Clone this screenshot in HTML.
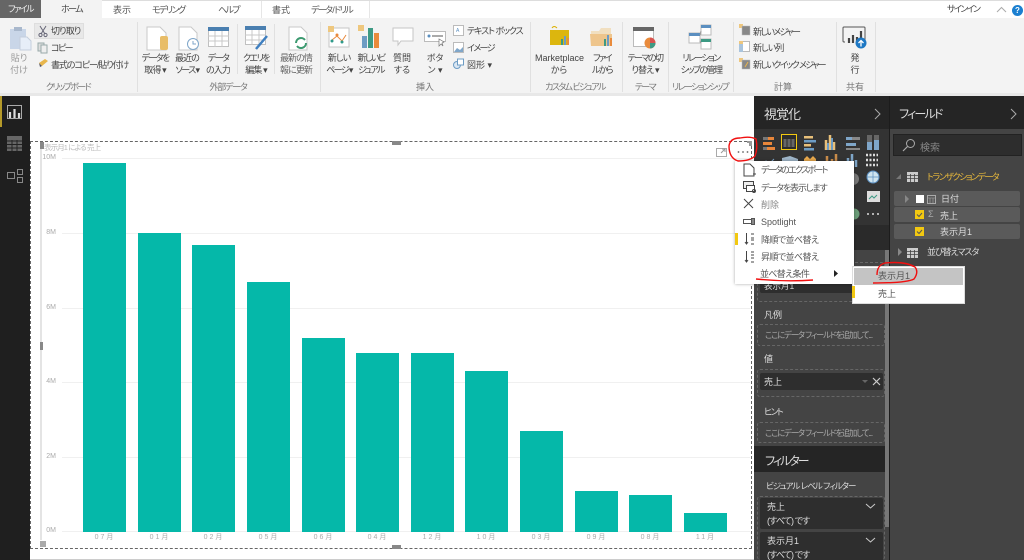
<!DOCTYPE html>
<html lang="ja"><head><meta charset="utf-8"><title>Power BI</title>
<style>
html,body{margin:0;padding:0;background:#fff}
#p{position:relative;width:1024px;height:560px;overflow:hidden;background:#fff;font-family:"Liberation Sans","Noto Sans CJK JP",sans-serif;font-size:9px;color:#555;font-feature-settings:"palt";letter-spacing:-.9px;filter:blur(.35px)}
#p div{position:absolute;white-space:nowrap}
#p .n{letter-spacing:0}
#p .k{letter-spacing:-1.6px}
.c{text-align:center;line-height:12px}
.g{color:#777;font-size:9px;text-align:center}
.sep{width:1px;background:#e0e0e0;top:22px;height:70px}
.vs{width:1px;background:#e0e0e0}
.bar{background:#05b8a9;width:43px;bottom:28px}
#p .x{top:532px;width:44px;text-align:center;font-size:7px;color:#aaa;letter-spacing:2px}
#p .y{font-size:7px;color:#aaa;text-align:right;width:20px;left:36px;letter-spacing:0}
.gl{left:62px;width:688px;height:1px;background:#f0f0f0}
.m{left:761px;font-size:9px;color:#555;line-height:12px}
.w{color:#ddd;font-size:9px}
.box{border:1px dashed #666;border-radius:3px;box-sizing:border-box}
svg{position:absolute;overflow:visible}
</style></head><body><div id="p">

<!-- tabs -->
<div style="left:0;top:0;width:1024px;height:18px;background:#fff"></div>
<div style="left:0;top:0;width:1024px;height:1px;background:#ddd"></div>
<div class="k" style="left:0;top:0;width:41px;height:18px;background:#666;color:#eee;font-size:9px;line-height:18px;text-align:center">ファイル</div>
<div class="k" style="left:41px;top:0;width:61px;height:19px;background:#f3f3f3;color:#444;line-height:19px;text-align:center">ホーム</div>
<div class="n" style="left:113px;top:3px;color:#555">表示</div>
<div class="k" style="left:152px;top:3px;color:#555">モデリング</div>
<div class="k" style="left:218px;top:3px;color:#555">ヘルプ</div>
<div style="left:261px;top:1px;width:1px;height:17px;background:#e6e6e6"></div>
<div class="n" style="left:272px;top:3px;color:#555">書式</div>
<div class="k" style="left:311px;top:3px;color:#555">データ / ドリル</div>
<div style="left:369px;top:1px;width:1px;height:17px;background:#e6e6e6"></div>
<div class="k" style="left:947px;top:2px;color:#444">サインイン</div>
<svg style="left:996px;top:6px" width="12" height="8"><path d="M1 6L5.500 1.500L10 6" fill="none" stroke="#aaa"/></svg>
<div class="n" style="left:1012px;top:5px;width:11px;height:11px;border-radius:50%;background:#1a7fd0;color:#fff;font-size:8px;font-weight:bold;line-height:11px;text-align:center">?</div>

<!-- ribbon -->
<div style="left:0;top:18px;width:1024px;height:75px;background:#f3f3f3"></div>
<div style="left:0;top:93px;width:1024px;height:3px;background:#e8e8e8"></div>
<div class="sep" style="left:137px"></div><div class="sep" style="left:320px"></div><div class="sep" style="left:530px"></div><div class="sep" style="left:622px"></div><div class="sep" style="left:668px"></div><div class="sep" style="left:733px"></div><div class="sep" style="left:836px"></div><div class="sep" style="left:875px"></div>
<div class="vs" style="left:237px;top:24px;height:50px"></div><div class="vs" style="left:274px;top:24px;height:50px"></div>

<!-- clipboard -->
<svg style="left:9px;top:26px" width="24" height="28"><rect x="1" y="3" width="16" height="20" fill="#c9d6e8"/><rect x="5" y="1" width="8" height="4" fill="#a9b8cc"/><path d="M11 11h7l4 4v9H11z" fill="#e7eef8" stroke="#c5cfdd"/></svg>
<div class="c n" style="left:8px;top:52px;width:22px;color:#999">貼り<br>付け</div>
<div style="left:34px;top:23px;width:50px;height:16px;background:#e8e8e8;border:1px solid #dedede;box-sizing:border-box"></div>
<svg style="left:38px;top:25px" width="10" height="12"><path d="M2 1L7 9M8 1L3 9" stroke="#667" fill="none"/><circle cx="2.500" cy="10" r="1.600" fill="none" stroke="#667"/><circle cx="7.500" cy="10" r="1.600" fill="none" stroke="#667"/></svg>
<div style="left:51px;top:24px;color:#444">切り取り</div>
<svg style="left:37px;top:42px" width="12" height="12"><rect x="1" y="1" width="6" height="8" fill="#ddd" stroke="#9aa"/><rect x="4" y="3" width="6" height="8" fill="#eee" stroke="#9aa"/></svg>
<div class="k" style="left:51px;top:41px;color:#444">コピー</div>
<svg style="left:38px;top:58px" width="11" height="10"><path d="M1 5L7 1L10 3L4 8z" fill="#e8b64c"/><path d="M1 5L4 8L2 9z" fill="#556"/></svg>
<div style="left:51px;top:58px;color:#444;letter-spacing:-1.1px">書式のコピー/貼り付け</div>
<div class="g k" style="left:40px;top:80px;width:56px">クリップボード</div>

<!-- external data -->
<svg style="left:146px;top:26px" width="24" height="24"><path d="M1 1h13l6 6v17H1z" fill="#fff" stroke="#c9c9c9"/><rect x="14" y="10" width="8" height="14" rx="2" fill="#e8bd68"/></svg>
<div class="c" style="left:140px;top:52px;width:30px;color:#444"><span class="k">データを</span><br>取得 ▾</div>
<svg style="left:178px;top:26px" width="24" height="24"><path d="M1 1h12l6 6v17H1z" fill="#fff" stroke="#c9c9c9"/><circle cx="15" cy="18" r="5.500" fill="#fff" stroke="#7fa6c9"/><path d="M15 15v3h3" fill="none" stroke="#7fa6c9"/></svg>
<div class="c" style="left:171px;top:52px;width:32px;color:#444">最近の<br><span class="k">ソース ▾</span></div>
<svg style="left:208px;top:27px" width="21" height="20"><rect x=".5" y=".5" width="20" height="19" fill="#fff" stroke="#c0c0c0"/><rect width="21" height="4" fill="#4a7fb0"/><path d="M0 9h21M0 14h21M7 4v16M14 4v16" stroke="#c8c8c8"/></svg>
<div class="c" style="left:202px;top:52px;width:32px;color:#444"><span class="k">データ</span><br>の入力</div>
<svg style="left:245px;top:26px" width="24" height="24"><rect x=".5" y=".5" width="20" height="18" fill="#fff" stroke="#c0c0c0"/><rect width="21" height="4" fill="#4a7fb0"/><path d="M0 9h21M0 14h21M7 4v15M14 4v15" stroke="#c8c8c8"/><path d="M11 23L22 10" stroke="#3f7fc0" stroke-width="2.500"/></svg>
<div class="c" style="left:240px;top:52px;width:32px;color:#444"><span class="k">クエリを</span><br>編集 ▾</div>
<svg style="left:288px;top:26px" width="22" height="24"><path d="M1 1h12l6 6v17H1z" fill="#fff" stroke="#c9c9c9"/><path d="M8 17a5 5 0 0 1 9-3M18 17a5 5 0 0 1-9 3" fill="none" stroke="#3c9a70" stroke-width="2"/></svg>
<div class="c" style="left:275px;top:52px;width:42px;color:#666">最新の情<br>報に更新</div>
<div class="g" style="left:205px;top:80px;width:46px;letter-spacing:-1.2px">外部データ</div>

<!-- insert -->
<svg style="left:328px;top:26px" width="22" height="22"><rect x="1" y="2" width="20" height="19" fill="#fff" stroke="#c5c5c5"/><rect x="0" y="0" width="6" height="6" fill="#eec77e"/><path d="M4 14L9 10L14 15L18 9" fill="none" stroke="#e9893b"/><circle cx="4" cy="15" r="1.500" fill="#2f9a8a"/><circle cx="14" cy="16" r="1.500" fill="#2f9a8a"/><circle cx="9" cy="9" r="1.500" fill="#e9893b"/></svg>
<div class="c" style="left:323px;top:52px;width:32px;color:#444">新しい<br><span class="k">ページ ▾</span></div>
<svg style="left:358px;top:25px" width="22" height="23"><rect x="0" y="0" width="6" height="6" fill="#eec77e"/><rect x="4" y="11" width="5" height="12" fill="#6d9cc4"/><rect x="10" y="3" width="5" height="20" fill="#3d9a84"/><rect x="16" y="8" width="5" height="15" fill="#e98b3c"/></svg>
<div class="c k" style="left:355px;top:52px;width:32px;color:#444">新しいビ<br>ジュアル</div>
<svg style="left:392px;top:27px" width="22" height="20"><path d="M1 1h20v13H9l-3 4v-4H1z" fill="#fff" stroke="#c5c5c5"/></svg>
<div class="c n" style="left:390px;top:52px;width:24px;color:#444">質問<br>する</div>
<svg style="left:424px;top:31px" width="23" height="16"><rect x=".5" y=".5" width="21" height="10" fill="#fff" stroke="#bbb"/><circle cx="5" cy="5" r="1.500" fill="#5b8fc0"/><path d="M8 5h11" stroke="#555"/><path d="M15 8v7l2-2 2 2-1-3 2-1z" fill="#fff" stroke="#777" stroke-width=".7"/></svg>
<div class="c n" style="left:421px;top:52px;width:28px;color:#444">ボタ<br>ン ▾</div>
<svg style="left:453px;top:25px" width="12" height="12"><rect x=".5" y=".5" width="10" height="10" fill="#fff" stroke="#bbb"/><text x="3" y="7" font-size="5" fill="#5b8fc0" font-family="Liberation Sans">A</text></svg>
<div style="left:467px;top:24px;color:#444;letter-spacing:-1.1px">テキスト ボックス</div>
<svg style="left:453px;top:42px" width="12" height="12"><rect x=".5" y=".5" width="10" height="10" fill="#fff" stroke="#bbb"/><path d="M1 10L4 6L7 8L10 5V10z" fill="#7fa6c9"/></svg>
<div class="k" style="left:467px;top:41px;color:#444">イメージ</div>
<svg style="left:453px;top:58px" width="12" height="12"><circle cx="4" cy="7" r="3.500" fill="#dbe7f3" stroke="#6d9cc4"/><rect x="4.500" y="1" width="6" height="6" fill="#fff" stroke="#6d9cc4"/></svg>
<div class="n" style="left:467px;top:58px;color:#444">図形 ▾</div>
<div class="g n" style="left:410px;top:80px;width:30px">挿入</div>

<!-- custom -->
<svg style="left:549px;top:24px" width="22" height="24"><path d="M3 4q2-3 5 0" fill="none" stroke="#dcb000"/><rect x="1" y="6" width="19" height="15" fill="#dcb60e"/><rect x="12" y="15" width="2" height="6" fill="#3d9a84"/><rect x="15" y="12" width="2" height="9" fill="#6d9cc4"/><rect x="18" y="14" width="2" height="7" fill="#e98b3c"/></svg>
<div class="c n" style="left:535px;top:52px;width:48px;color:#444">Marketplace<br>から</div>
<svg style="left:590px;top:26px" width="24" height="21"><path d="M1 5h8l2-3h10v6H1z" fill="#f1dfc0"/><path d="M0 8h22v12H1z" fill="#eec58c"/><rect x="14" y="13" width="2" height="7" fill="#3d9a84"/><rect x="17" y="9" width="2" height="11" fill="#6d9cc4"/><rect x="20" y="12" width="2" height="8" fill="#e98b3c"/></svg>
<div class="c k" style="left:586px;top:52px;width:32px;color:#444">ファイ<br>ルから</div>
<div class="g k" style="left:537px;top:80px;width:76px">カスタム ビジュアル</div>

<!-- theme -->
<svg style="left:633px;top:27px" width="26" height="23"><rect x=".5" y=".5" width="20" height="19" fill="#fff" stroke="#bbb"/><rect width="21" height="4" fill="#666"/><circle cx="17" cy="16" r="5.500" fill="#e98b3c"/><path d="M17 16V10.500A5.500 5.500 0 0 1 22.500 16z" fill="#d9534f"/><path d="M17 16H22.500A5.500 5.500 0 0 1 17 21.500z" fill="#3d9a84"/></svg>
<div class="c" style="left:624px;top:52px;width:42px;color:#444"><span class="k">テーマの切</span><br>り替え ▾</div>
<div class="g k" style="left:630px;top:80px;width:30px">テーマ</div>

<!-- relation -->
<svg style="left:689px;top:24px" width="24" height="26"><rect x="0" y="9" width="11" height="10" fill="#fff" stroke="#bbb"/><rect y="9" width="11" height="3" fill="#5b8fc0"/><rect x="12" y="1" width="10" height="10" fill="#fff" stroke="#bbb"/><rect x="12" y="1" width="10" height="3" fill="#5b8fc0"/><rect x="12" y="15" width="10" height="10" fill="#fff" stroke="#bbb"/><rect x="12" y="15" width="10" height="3" fill="#3d9a84"/><path d="M11 11L12 7M11 17L12 19" stroke="#999"/></svg>
<div class="c k" style="left:671px;top:52px;width:60px;color:#444">リレーション<br>シップの管理</div>
<div class="g k" style="left:669px;top:80px;width:62px">リレーションシップ</div>

<!-- calc -->
<svg style="left:739px;top:24px" width="12" height="12"><rect width="4" height="4" fill="#eec77e"/><rect x="3" y="2" width="8" height="9" fill="#888" stroke="#bbb" stroke-width=".5"/></svg>
<div class="k" style="left:753px;top:25px;color:#444">新しいメジャー</div>
<svg style="left:739px;top:41px" width="12" height="12"><rect x=".5" y=".5" width="10" height="10" fill="#fff" stroke="#bbb"/><rect width="4" height="4" fill="#eec77e"/><rect x="0" y="3" width="4" height="8" fill="#a9c4dd"/></svg>
<div style="left:753px;top:41px;color:#444">新しい列</div>
<svg style="left:739px;top:58px" width="12" height="12"><rect width="4" height="4" fill="#eec77e"/><rect x="3" y="2" width="8" height="9" fill="#888" stroke="#bbb" stroke-width=".5"/><path d="M6 9L9 4" stroke="#e9b44c"/></svg>
<div class="k" style="left:753px;top:58px;color:#444">新しいクイック メジャー</div>
<div class="g n" style="left:763px;top:80px;width:40px">計算</div>

<!-- publish -->
<svg style="left:842px;top:26px" width="28" height="24"><path d="M3 16H2q-1 0-1-1V2q0-1 1-1h20q1 0 1 1v13" fill="none" stroke="#555"/><path d="M7 17v-5M11 17V9M15 17v-6M19 17V5" stroke="#444" stroke-width="2.200"/><circle cx="19" cy="17" r="5.500" fill="#1e78c4"/><path d="M19 20.500v-6M16.500 17l2.500-2.500 2.500 2.500" fill="none" stroke="#fff" stroke-width="1.300"/></svg>
<div class="c n" style="left:848px;top:52px;width:14px;color:#444;font-size:9px">発<br>行</div>
<div class="g n" style="left:840px;top:80px;width:30px">共有</div>

<!-- left rail -->
<div style="left:0;top:96px;width:30px;height:464px;background:#1f1f1f"></div>
<div style="left:0;top:96px;width:2px;height:31px;background:#b59a2a"></div>
<svg style="left:7px;top:105px" width="16" height="16"><rect x=".5" y=".5" width="14" height="13" fill="none" stroke="#aaa"/><path d="M3 13V7M7.500 13V4M12 13V8" stroke="#ddd" stroke-width="2.200"/></svg>
<svg style="left:7px;top:136px" width="16" height="16"><rect y="0" width="15" height="15" fill="#666"/><path d="M0 5h15M0 8.500h15M0 12h15M5 4v11M10 4v11" stroke="#222"/></svg>
<svg style="left:7px;top:167px" width="16" height="16"><rect x=".5" y="5.500" width="7" height="6" fill="none" stroke="#888"/><rect x="10.500" y="2.500" width="5" height="5" fill="none" stroke="#888"/><rect x="10.500" y="10.500" width="5" height="5" fill="none" stroke="#888"/></svg>

<!-- chart frame -->
<div style="left:30px;top:141px;width:722px;height:408px;border:1px dashed #666;box-sizing:border-box"></div>
<div style="left:40px;top:146px;width:2px;height:394px;background:#e4e4e4"></div>
<div style="left:40px;top:142px;width:4px;height:7px;background:#888"></div>
<div style="left:40px;top:541px;width:6px;height:6px;background:#aaa"></div>
<div style="left:392px;top:141px;width:9px;height:4px;background:#888"></div>
<div style="left:392px;top:545px;width:9px;height:4px;background:#888"></div>
<div style="left:40px;top:342px;width:3px;height:8px;background:#888"></div>
<div style="left:44px;top:142px;font-size:7.500px;color:#bbb">表示月1 による 売上</div>

<div class="gl" style="top:158px"></div><div class="gl" style="top:233px"></div><div class="gl" style="top:308px"></div><div class="gl" style="top:382px"></div><div class="gl" style="top:457px"></div><div class="gl" style="top:531px"></div>
<div class="y" style="top:154px">10M</div><div class="y" style="top:229px">8M</div><div class="y" style="top:304px">6M</div><div class="y" style="top:378px">4M</div><div class="y" style="top:453px">2M</div><div class="y" style="top:527px">0M</div>

<div class="bar" style="left:83px;top:163px"></div>
<div class="bar" style="left:138px;top:233px"></div>
<div class="bar" style="left:192px;top:245px"></div>
<div class="bar" style="left:247px;top:282px"></div>
<div class="bar" style="left:302px;top:338px"></div>
<div class="bar" style="left:356px;top:353px"></div>
<div class="bar" style="left:411px;top:353px"></div>
<div class="bar" style="left:465px;top:371px"></div>
<div class="bar" style="left:520px;top:431px"></div>
<div class="bar" style="left:575px;top:491px"></div>
<div class="bar" style="left:629px;top:495px"></div>
<div class="bar" style="left:684px;top:513px"></div>
<div class="x" style="left:83px">07月</div><div class="x" style="left:138px">01月</div><div class="x" style="left:192px">02月</div><div class="x" style="left:247px">05月</div><div class="x" style="left:302px">06月</div><div class="x" style="left:356px">04月</div><div class="x" style="left:411px">12月</div><div class="x" style="left:465px">10月</div><div class="x" style="left:520px">03月</div><div class="x" style="left:575px">09月</div><div class="x" style="left:629px">08月</div><div class="x" style="left:684px">11月</div>
<div style="left:30px;top:559px;width:724px;height:1px;background:#ccc"></div>

<!-- viz panel -->
<div style="left:754px;top:96px;width:135px;height:464px;background:#444"></div>
<div style="left:754px;top:129px;width:135px;height:96px;background:#333"></div>
<div style="left:754px;top:96px;width:135px;height:33px;background:#252525"></div>
<div style="left:764px;top:104px;color:#ddd;font-size:13px;letter-spacing:-1px">視覚化</div>
<svg style="left:874px;top:108px" width="8" height="12"><path d="M1 1L6 6L1 11" fill="none" stroke="#aaa"/></svg>
<div style="left:889px;top:96px;width:1px;height:464px;background:#1c1c1c"></div>

<svg style="left:760px;top:132px" width="128" height="90">
<g transform="translate(1,2)">
<rect x="2" y="3" width="5" height="3" fill="#777"/><rect x="7" y="3" width="6" height="3" fill="#e8863a"/><rect x="2" y="8" width="9" height="3" fill="#e8863a"/><rect x="2" y="13" width="4" height="3" fill="#777"/><rect x="6" y="13" width="8" height="3" fill="#e8863a"/>
</g>
<rect x="21.500" y="2.500" width="15" height="15" fill="#2c2c2c" stroke="#f2c811"/><path d="M25 15V7M29 15V7M33 15V7" stroke="#666" stroke-width="3"/>
<g transform="translate(0,1)">
<rect x="44" y="3" width="9" height="2.500" fill="#e8c07a"/><rect x="44" y="7" width="12" height="2.500" fill="#6d9cc4"/><rect x="44" y="11" width="7" height="2.500" fill="#e8c07a"/><rect x="44" y="15" width="10" height="2.500" fill="#6d9cc4"/>
<path d="M66 17V7M70 17V2M74 17V9" stroke="#e8c07a" stroke-width="2.500"/><path d="M68 17V10M72 17V5" stroke="#6d9cc4" stroke-width="2"/>
<rect x="86" y="4" width="14" height="3" fill="#7fa6c9"/><rect x="86" y="10" width="10" height="3" fill="#7fa6c9"/><rect x="92" y="4" width="8" height="3" fill="#888"/><rect x="86" y="15" width="14" height="2" fill="#888"/>
<rect x="107" y="2" width="5" height="15" fill="#7fa6c9"/><rect x="114" y="2" width="5" height="15" fill="#7fa6c9"/><rect x="107" y="2" width="5" height="7" fill="#666"/><rect x="114" y="2" width="5" height="5" fill="#666"/>
</g>
<g transform="translate(0,19)">
<path d="M2 16L6 10L10 12L14 8" stroke="#7fa6c9" fill="none"/><path d="M2 14L8 15L14 12" stroke="#e8863a" fill="none"/>
<path d="M22 16V7L30 5L38 8V16z" fill="#9fb6c9"/>
<path d="M44 8l3-3 3 3 3-3 3 3v3l-12 0z" fill="#e8a94c"/><path d="M44 11h12v5H44z" fill="#777"/>
<path d="M67 16V5M72 16V8M76 16V3" stroke="#c98c4a" stroke-width="2.500"/>
<path d="M88 16V7M92 16V3M96 16V9" stroke="#7fa6c9" stroke-width="2.500"/>
<path d="M106 4h12M106 9h12M106 14h12" stroke="#ddd" stroke-width="2.500" stroke-dasharray="2 1.500"/>
</g>
<circle cx="93" cy="47" r="6" fill="#777"/>
<circle cx="113" cy="45" r="6" fill="#cfe4ee" stroke="#5b8fc0"/><path d="M107 45h12M113 39v12" stroke="#5b8fc0" stroke-width=".7"/>
<rect x="107" y="59" width="13" height="11" fill="#ddd"/><path d="M109 67l3-3 2 2 3-3" stroke="#3d9a84" fill="none"/><rect x="84" y="60" width="10" height="11" fill="#ccc"/>
<circle cx="94" cy="82" r="5.500" fill="#6a9c78"/>
<path d="M107 82h2M112 82h2M117 82h2" stroke="#ddd" stroke-width="1.500"/>
</svg>

<div style="left:754px;top:225px;width:135px;height:25px;background:#2a2a2a"></div>
<div style="left:885px;top:250px;width:4px;height:277px;background:#777"></div>
<div class="box" style="left:757px;top:262px;width:128px;height:40px"></div>
<div style="left:760px;top:278px;width:123px;height:15px;background:#2e2e2e;border-radius:2px"></div>
<div class="w n" style="left:764px;top:280px;font-size:8.500px">表示月1</div>

<div class="w n" style="left:764px;top:308px">凡例</div>
<div class="box" style="left:757px;top:324px;width:128px;height:22px"></div>
<div style="left:765px;top:329px;color:#aaa;font-size:8.300px;letter-spacing:-1.1px">ここにデータ フィールドを追加して...</div>
<div class="w n" style="left:764px;top:352px">値</div>
<div class="box" style="left:757px;top:369px;width:128px;height:28px"></div>
<div style="left:760px;top:373px;width:123px;height:17px;background:#2e2e2e;border-radius:2px"></div>
<div class="w n" style="left:764px;top:375px">売上</div>
<svg style="left:861px;top:379px" width="8" height="5"><path d="M1 1h6L4 4z" fill="#666"/></svg>
<svg style="left:872px;top:377px" width="9" height="9"><path d="M1 1L8 8M8 1L1 8" stroke="#ccc" stroke-width="1.200"/></svg>
<div class="w k" style="left:764px;top:405px">ヒント</div>
<div class="box" style="left:757px;top:422px;width:128px;height:21px"></div>
<div style="left:765px;top:427px;color:#aaa;font-size:8.300px;letter-spacing:-1.1px">ここにデータ フィールドを追加して...</div>
<div style="left:754px;top:446px;width:131px;height:26px;background:#252525"></div>
<div style="left:765px;top:452px;color:#ddd;font-size:12px;letter-spacing:-2px">フィルター</div>
<div class="w" style="left:766px;top:480px;font-size:8.500px;letter-spacing:-1px">ビジュアル レベル フィルター</div>
<div class="box" style="left:757px;top:496px;width:128px;height:64px"></div>
<div style="left:760px;top:498px;width:123px;height:31px;background:#2e2e2e;border-radius:2px"></div>
<div style="left:760px;top:532px;width:123px;height:28px;background:#2e2e2e;border-radius:2px 2px 0 0"></div>
<div class="w n" style="left:767px;top:500px">売上</div><div class="w" style="left:767px;top:514px">(すべて) です</div>
<div class="w n" style="left:767px;top:534px">表示月1</div><div class="w" style="left:767px;top:548px">(すべて) です</div>
<svg style="left:865px;top:503px" width="11" height="7"><path d="M1 1L5.500 5L10 1" fill="none" stroke="#ccc"/></svg>
<svg style="left:865px;top:537px" width="11" height="7"><path d="M1 1L5.500 5L10 1" fill="none" stroke="#ccc"/></svg>

<!-- fields panel -->
<div style="left:890px;top:96px;width:134px;height:464px;background:#444"></div>
<div style="left:890px;top:96px;width:134px;height:33px;background:#252525"></div>
<div style="left:899px;top:105px;color:#ddd;font-size:12px;letter-spacing:-1.800px">フィールド</div>
<svg style="left:1010px;top:108px" width="8" height="12"><path d="M1 1L6 6L1 11" fill="none" stroke="#aaa"/></svg>
<div style="left:893px;top:134px;width:129px;height:22px;background:#2d2d2d;border:1px solid #222;box-sizing:border-box"></div>
<svg style="left:902px;top:138px" width="14" height="14"><circle cx="8.500" cy="5.500" r="4" fill="none" stroke="#aaa"/><path d="M5.500 8.500L1 13" stroke="#aaa" stroke-width="1.200"/></svg>
<div class="n" style="left:920px;top:139px;color:#888;font-size:10px">検索</div>
<svg style="left:896px;top:174px" width="6" height="6"><path d="M5 0V5H0z" fill="#777"/></svg>
<svg style="left:907px;top:172px" width="11" height="10"><rect width="11" height="10" fill="#ccc"/><path d="M0 3.500h11M0 6.500h11M3.500 2v8M7.500 2v8" stroke="#444" stroke-width=".8"/></svg>
<div style="left:927px;top:170px;color:#e8b93c;font-size:9px;letter-spacing:-1.500px">トランザクションデータ</div>
<div style="left:894px;top:191px;width:126px;height:15px;background:#5a5a5a;border-radius:2px"></div>
<div style="left:894px;top:207px;width:126px;height:15px;background:#5a5a5a;border-radius:2px"></div>
<div style="left:894px;top:224px;width:126px;height:15px;background:#5a5a5a;border-radius:2px"></div>
<svg style="left:905px;top:195px" width="5" height="8"><path d="M0 0L4 4L0 8z" fill="#888"/></svg>
<div style="left:916px;top:195px;width:8px;height:8px;background:#fff"></div>
<svg style="left:927px;top:195px" width="9" height="9"><rect x=".5" y=".5" width="8" height="8" fill="none" stroke="#aaa"/><path d="M0 3h9M3 3v6M6 3v6" stroke="#aaa" stroke-width=".6"/></svg>
<div class="n" style="left:941px;top:192px;color:#ddd">日付</div>
<svg style="left:915px;top:210px" width="10" height="10"><rect width="9" height="9" fill="#f2c811"/><path d="M2 4.500L4 6.500L7 3" stroke="#555" fill="none"/></svg>
<div class="n" style="left:928px;top:209px;color:#aaa;font-size:9px">Σ</div>
<div class="n" style="left:940px;top:209px;color:#ddd">売上</div>
<svg style="left:915px;top:227px" width="10" height="10"><rect width="9" height="9" fill="#f2c811"/><path d="M2 4.500L4 6.500L7 3" stroke="#555" fill="none"/></svg>
<div class="n" style="left:940px;top:225px;color:#ddd">表示月1</div>
<svg style="left:898px;top:248px" width="5" height="8"><path d="M0 0L4 4L0 8z" fill="#888"/></svg>
<svg style="left:907px;top:248px" width="11" height="10"><rect width="11" height="10" fill="#ccc"/><path d="M0 3.500h11M0 6.500h11M3.500 2v8M7.500 2v8" stroke="#444" stroke-width=".8"/></svg>
<div style="left:927px;top:245px;color:#ddd;letter-spacing:-1.100px">並び替えマスタ</div>

<!-- focus icons -->
<svg style="left:716px;top:148px" width="12" height="10"><rect x=".5" y=".5" width="10" height="8" fill="#fff" stroke="#aaa"/><path d="M5 5L9 1M6 1h3v3" fill="none" stroke="#999"/></svg>
<svg style="left:0;top:0" width="1024" height="560"><circle cx="738.500" cy="152" r=".9" fill="#666"/><circle cx="743" cy="152" r=".9" fill="#666"/><circle cx="747.500" cy="152" r=".9" fill="#666"/><rect x="749" y="143" width="3" height="3" fill="#999"/><rect x="747" y="141" width="5" height="2" fill="#999"/></svg>

<!-- context menu -->
<div style="left:735px;top:161px;width:119px;height:123px;background:#fff;box-shadow:0 0 3px rgba(0,0,0,.35)"></div>
<svg style="left:743px;top:163px" width="14" height="14"><path d="M1 1h6l4 4v8H1z" fill="#fff" stroke="#444"/><path d="M10 11h3" stroke="#444"/></svg>
<div class="m" style="top:164px;letter-spacing:-1.700px">データのエクスポート</div>
<svg style="left:743px;top:181px" width="14" height="13"><rect x=".5" y=".5" width="10" height="7" fill="#eee" stroke="#444"/><rect x="3.500" y="4.500" width="8" height="6" fill="#fff" stroke="#444"/><circle cx="11" cy="10" r="1.500" fill="none" stroke="#444"/></svg>
<div class="m" style="top:182px;letter-spacing:-1.100px">データを表示します</div>
<svg style="left:743px;top:198px" width="11" height="11"><path d="M1 1L10 10M10 1L1 10" stroke="#444"/></svg>
<div class="m n" style="top:199px;color:#888">削除</div>
<svg style="left:743px;top:218px" width="13" height="8"><rect x=".5" y="1.500" width="8" height="4" fill="#fff" stroke="#555"/><rect x="8.500" y=".5" width="3" height="6" fill="#888" stroke="#555"/></svg>
<div class="m n" style="top:216px">Spotlight</div>
<div style="left:735px;top:233px;width:3px;height:12px;background:#f2c811"></div>
<svg style="left:744px;top:232px" width="11" height="14"><path d="M2.500 1v11M1 10l1.500 2L4 10" fill="none" stroke="#444"/><path d="M7 2h3M7 6h3M7 8h3M7 12h3" stroke="#444"/></svg>
<div class="m" style="top:234px;letter-spacing:-.6px">降順で並べ替え</div>
<svg style="left:744px;top:250px" width="11" height="14"><path d="M2.500 1v11M1 10l1.500 2L4 10" fill="none" stroke="#444"/><path d="M7 2h3M7 5h3M7 8h3M7 12h3" stroke="#444"/></svg>
<div class="m" style="top:251px;letter-spacing:-.6px">昇順で並べ替え</div>
<div class="m" style="left:760px;top:268px;letter-spacing:-.7px">並べ替え条件</div>
<svg style="left:834px;top:270px" width="5" height="7"><path d="M0 0L4 3.500L0 7z" fill="#222"/></svg>
<!-- submenu -->
<div style="left:852px;top:266px;width:113px;height:38px;background:#fff;border:1px solid #ddd;box-sizing:border-box"></div>
<div style="left:854px;top:268px;width:109px;height:17px;background:#c4c4c4"></div>
<div style="left:852px;top:286px;width:3px;height:12px;background:#f2c811"></div>
<div class="m n" style="left:878px;top:270px">表示月1</div>
<div class="m n" style="left:878px;top:288px">売上</div>

<!-- red annotations -->
<svg style="left:0;top:0" width="1024" height="560">
<path d="M740 138q-10 0-11 8q0 12 9 15q12 0 17-5q3-8 1-17q-6-3-16-1z" fill="none" stroke="#f01010" stroke-width="1.400"/>
<path d="M756 279q30 3 57 1" fill="none" stroke="#f01010" stroke-width="1.400"/>
<path d="M873 283q34 0 41-4q5-7 1-12q-10-6-30-4q-8 2-8 12" fill="none" stroke="#f01010" stroke-width="1.400"/>
</svg>
</div></body></html>
